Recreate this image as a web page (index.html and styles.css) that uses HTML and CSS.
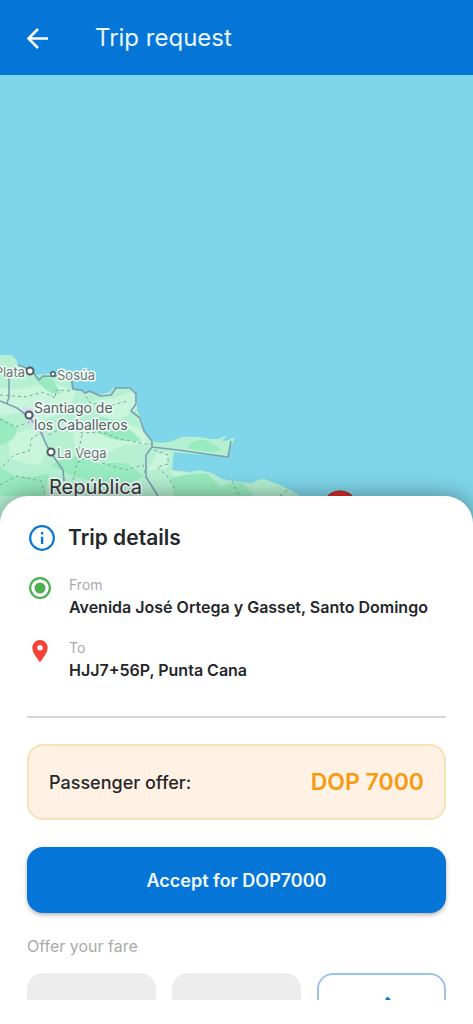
FILE: index.html
```
<!DOCTYPE html>
<html lang="en">
<head>
<meta charset="utf-8">
<meta name="viewport" content="width=device-width, initial-scale=1">
<title>Trip request</title>
<link rel="stylesheet" href="styles.css">
</head>
<body>
<header class="topbar">
	<button class="back" aria-label="Back">
		<svg width="24" height="24" viewBox="0 0 24 24" fill="none" stroke="#fff" stroke-width="2.600"><path d="M24 12.500H4.500M14 3L4.500 12.500 14 22"/></svg>
	</button>
	<h1>Trip request</h1>
</header>

<div class="map">
	<svg class="map-art" viewBox="0 75 473 450" preserveAspectRatio="xMinYMax slice">
		<!-- land -->
		<path fill="#b5f0d3" d="M0 356L11 356Q16 359 18 365L25 371 36 376 49 375 60 378 70 382 74 391 87 393 99 396 110 393 113 389H129L137 395 137 411 142 421 144 431Q148 440 155 443 164 445 172 442L182 438Q200 437 210 440L218 440 227 436 222 442 229 441 235 438 231 447 228 459 213 456 192 455 174 453 172 471 191 473 Q198 470 203 472L212 474 222 480 240 483 252 484Q259 480 264 480L280 486 292 492 303 499V525H0z"/>
		<path fill="#c9f5dd" d="M0 388Q20 394 48 382L75 392Q74 405 66 412L36 424Q28 412 16 414L0 417zM92 402Q118 400 134 391L136 410Q128 416 118 421 104 420 98 414zM73 434Q90 420 109 422 134 425 144 432L148 447Q136 444 124 446 110 452 97 462 82 460 76 452zM8 439Q20 432 32 430 42 436 46 447 46 460 38 466 20 464 10 459zM171 472L192 475Q206 482 214 492L184 496zM156 455Q165 452 170 454L167 469Q158 472 148 471z"/>
		<path fill="#98ebbf" d="M0 419Q10 422 17 429 16 440 8 443L0 446zM51 467Q66 456 79 457 92 460 101 466 116 462 127 465L144 477Q134 484 119 485 96 484 76 478zM83 428Q92 417 105 419 122 421 128 429L142 442Q126 443 112 440zM171 479Q190 474 208 475 214 482 221 488 232 483 243 484L254 497H174zM0 468Q14 478 26 478 40 478 49 474L45 497H0zM188 446Q196 440 206 441 216 446 222 452 206 454 190 450zM33 378Q44 377 52 380L61 394Q52 396 45 390z"/>
		<path fill="#d9d9ef" d="M22 408L32 409 40 426 47 438 37 433 27 423z"/>
		<!-- province borders -->
		<g fill="none" stroke="#7da898" stroke-width="1" stroke-dasharray="3 3">
			<path d="M0 396L26 398 42 393 56 399 55 391 73 392"/>
			<path d="M0 420L15 428 30 423M43 433L32 439 29 452 14 456 3 467"/>
			<path d="M49 436L67 426 81 434 102 433 120 440 151 446"/>
			<path d="M82 436L79 450 92 455 77 464 73 481"/>
			<path d="M102 464L126 471 143 466 146 479M154 451L168 456 168 465 157 468 168 478 176 492"/>
			<path d="M83 392L90 404 110 407 127 402M0 486L17 477 41 482 45 496M232 482L239 496M280 497L289 490"/>
		</g>
		<!-- roads -->
		<g fill="none" stroke="#7d9eb2" stroke-width="1.600" stroke-linejoin="round">
			<path d="M9 374L9 398 7 404M18 366L31 371 39 381 43 377 71 378 73 390 82 391 85 394 90 392 100 397 111 396 116 389 130 389 136 395 136 405 131 412 140 419 144 432 152 442 152 448 146 456 146 478 158 497"/>
			<path d="M152 448L178 451 206 455 228 458 231 442"/>
			<path d="M0 402L17 409 29 418 40 431 46 445 51 454 63 471 64 482"/>
		</g>
		<g fill="#fff" stroke="#505b60" stroke-width="2">
			<circle cx="30" cy="372" r="3.500"/>
			<circle cx="53" cy="375" r="2.200" stroke-width="1.400"/>
			<circle cx="29" cy="416" r="3.500"/>
			<circle cx="51" cy="453" r="3.500"/>
		</g>
		<g class="place">
			<text x="25" y="378" text-anchor="end">Plata</text>
			<text x="57" y="381">Sosúa</text>
			<text x="57" y="459">La Vega</text>
		</g>
		<g class="place city">
			<text x="34" y="414">Santiago de</text>
			<text x="34" y="431">los Caballeros</text>
		</g>
		<text class="place country" x="49" y="495">República</text>
		<circle cx="340" cy="510" r="18" fill="#e02b2b" stroke="#a52121" stroke-width="1"/>
	</svg>
</div>

<main class="sheet">
	<div class="sheet-title">
		<svg width="28" height="28" viewBox="0 0 28 28"><circle cx="14" cy="14" r="11.800" fill="none" stroke="#0675d8" stroke-width="2.200"/><path fill="#0675d8" d="M12.900 12.700h2.400v7.300h-2.400zM12.900 7.900h2.400v2.500h-2.400z"/></svg>
		<h2>Trip details</h2>
	</div>

	<div class="stop">
		<svg width="26" height="26" viewBox="0 0 26 26"><circle cx="13" cy="13" r="9.800" fill="none" stroke="#4caf50" stroke-width="2.200"/><circle cx="13" cy="13" r="5.500" fill="#4caf50"/></svg>
		<div>
			<p class="label">From</p>
			<p class="address">Avenida José Ortega y Gasset, Santo Domingo</p>
		</div>
	</div>
	<div class="stop">
		<svg width="26" height="26" viewBox="0 0 26 26"><path fill="#f44336" fill-rule="evenodd" d="M13 2a7.700 7.700 0 0 0-7.700 7.700C5.300 15.500 13 24 13 24s7.700-8.500 7.700-14.300A7.700 7.700 0 0 0 13 2zm0 10.400a2.750 2.750 0 1 1 0-5.500 2.750 2.750 0 0 1 0 5.500z"/></svg>
		<div>
			<p class="label">To</p>
			<p class="address">HJJ7+56P, Punta Cana</p>
		</div>
	</div>

	<hr>

	<div class="offer">
		<span>Passenger offer:</span>
		<strong>DOP 7000</strong>
	</div>

	<button class="accept">Accept for DOP7000</button>

	<p class="fare-label">Offer your fare</p>
	<div class="fares">
		<button class="fare" aria-label="Fare option 1"></button>
		<button class="fare" aria-label="Fare option 2"></button>
		<button class="fare custom" aria-label="Edit fare">
			<svg width="24" height="24" viewBox="0 0 24 24"><path fill="#0675d8" d="M3 17.250V21h3.750L17.800 9.940l-3.750-3.750zM20.710 7.040a1 1 0 0 0 0-1.410l-2.340-2.340a1 1 0 0 0-1.410 0l-1.830 1.830 3.750 3.750z"/></svg>
		</button>
	</div>
</main>
</body>
</html>
```
FILE: styles.css
```
* {
	box-sizing: border-box;
}
body {
	margin: 0;
	min-height: 100vh;
	display: flex;
	flex-direction: column;
	padding-bottom: 24px;
	background-color: #fff;
	color: #25272b;
	font-family: Inter, "Noto Sans", sans-serif;
}
h1, h2, p {
	margin: 0;
}
button {
	border: none;
	padding: 0;
	font-family: inherit;
	cursor: pointer;
}
svg {
	display: block;
	flex: none;
}
.topbar {
	display: flex;
	align-items: center;
	gap: 47px;
	height: 75px;
	padding: 0 24px;
	background-color: #0675d8;
	color: #e9f7ff;
}
.topbar h1 {
	font-size: 24px;
	font-weight: 400;
	line-height: 32px;
}
.back {
	background: none;
}
.map {
	position: relative;
	flex: 1;
	min-height: 200px;
	margin-bottom: -28px;
	background-color: #7fd6ea;
	overflow: hidden;
}
.map-art {
	position: absolute;
	width: 100%;
	height: 100%;
}
.place {
	font-size: 13px;
	fill: #6c7775;
	stroke: #effbf6;
	stroke-width: 3px;
	stroke-linejoin: round;
	paint-order: stroke;
}
.city {
	font-size: 14px;
	fill: #56625f;
}
.country {
	font-size: 20px;
	font-weight: 400;
	fill: #303936;
}
.sheet {
	position: relative;
	padding: 28px 27px 0;
	border-radius: 28px 28px 0 0;
	background-color: #fff;
	box-shadow: 0 0 24px rgba(0, 0, 0, 0.4);
	clip-path: inset(-40px 0 0 0);
}
.sheet-title {
	display: flex;
	align-items: center;
	gap: 12px;
	padding-left: 1px;
	margin-bottom: 23px;
}
.sheet-title h2 {
	font-size: 21px;
	font-weight: 600;
	line-height: 28px;
}
.stop {
	display: flex;
	gap: 16px;
	margin-bottom: 19px;
}
.label {
	font-size: 14px;
	line-height: 20px;
	color: #aaa;
}
.address {
	font-size: 16px;
	font-weight: 600;
	line-height: 24px;
}
hr {
	margin: 34px 0 26px;
	border: none;
	height: 2px;
	background-color: #d6d6d8;
}
.offer {
	display: flex;
	align-items: center;
	justify-content: space-between;
	height: 76px;
	padding: 0 20px;
	margin-bottom: 27px;
	border: 2px solid #f8e1b6;
	border-radius: 16px;
	background-color: #fff2e4;
	font-size: 18px;
	font-weight: 500;
}
.offer strong {
	font-size: 23px;
	font-weight: 600;
	color: #f79a12;
}
.accept {
	display: block;
	width: 100%;
	height: 66px;
	margin-bottom: 23px;
	border-radius: 16px;
	background-color: #0675d8;
	box-shadow: 0 2px 4px rgba(0, 0, 0, 0.3);
	color: #f0faff;
	font-size: 18px;
	font-weight: 600;
}
.fare-label {
	margin-bottom: 17px;
	font-size: 16px;
	line-height: 20px;
	color: #aaa;
}
/* only the top of the fare buttons shows */
.fares {
	display: grid;
	grid-template-columns: repeat(3, 1fr);
	gap: 16px;
	height: 27px;
	overflow: hidden;
}
.fare {
	height: 66px;
	border-radius: 16px;
	background-color: #ededed;
}
.custom {
	display: flex;
	align-items: center;
	justify-content: center;
	border: 2px solid #9cc4e8;
	background-color: #fff;
}
```
